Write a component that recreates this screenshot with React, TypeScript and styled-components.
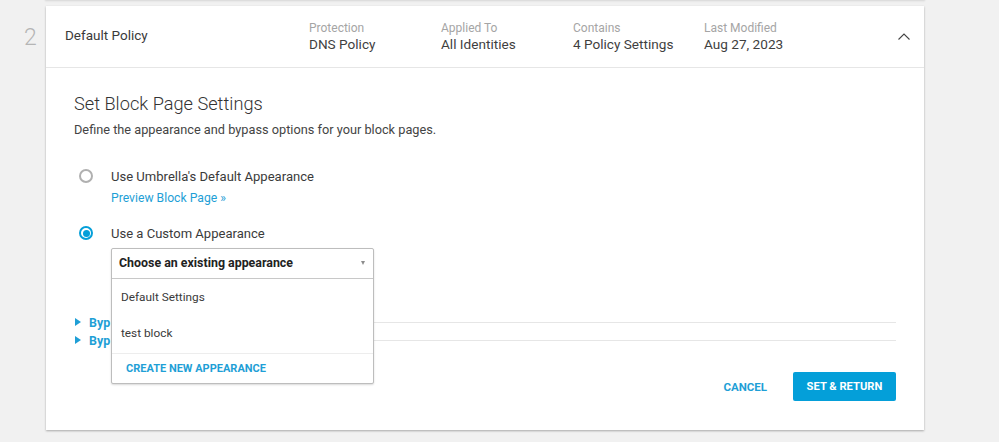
import styled, { createGlobalStyle } from 'styled-components';

const GlobalStyle = createGlobalStyle`
	html, body {
		margin: 0;
		height: 442px;
		overflow: hidden;
		background: #f1f1f1;
		font-family: Roboto, "Liberation Sans", sans-serif;
		color: #333;
	}
`;

const Page = styled.div`
	height: 442px;
	display: flex;
	flex-direction: column;
`;

const PrevCard = styled.div`
	height: 0;
	margin: 0 75px 6px 46px;
	box-shadow: 0 0 2px 1px #d4d4d4;
`;

const Row = styled.div`
	display: flex;
	align-items: flex-start;
`;

const RowNumber = styled.div`
	width: 46px;
	padding: 19px 0 0 15px;
	box-sizing: border-box;
	font-size: 23px;
	line-height: 26px;
	font-weight: 300;
	color: #b5b5b5;
	text-align: center;
`;

const Card = styled.section`
	width: 878px;
	height: 424px;
	background: #fff;
	box-shadow: 0 1px 2px 0 #a8a8a8;
`;

const Header = styled.header`
	height: 61px;
	border-bottom: 1px solid #e6e6e6;
	display: flex;
	align-items: flex-start;
	position: relative;
`;

const PolicyName = styled.div`
	width: 263px;
	padding: 20px 0 0 19px;
	box-sizing: border-box;
	font-size: 13.5px;
	line-height: 18px;
	color: #3a3a3a;
`;

const Meta = styled.div<{ $width: number }>`
	width: ${p => p.$width}px;
	padding-top: 15px;
`;

const MetaLabel = styled.div`
	font-size: 12px;
	line-height: 14px;
	color: #a5a5a5;
`;

const MetaValue = styled.div`
	font-size: 13.6px;
	line-height: 18px;
	color: #3f3f3f;
`;

const Chevron = styled.svg`
	position: absolute;
	left: 851px;
	top: 26px;
	width: 14px;
	height: 9px;
`;

const Body = styled.div`
	padding: 25px 28px 0 28px;
`;

const Title = styled.h2`
	margin: 0;
	font-size: 18.2px;
	line-height: 22px;
	font-weight: 300;
	color: #333;
`;

const Subtitle = styled.p`
	margin: 6px 0 0;
	font-size: 12.75px;
	line-height: 18px;
	color: #444;
`;

const RadioRow = styled.div<{ $top: number }>`
	display: flex;
	align-items: center;
	margin-top: ${p => p.$top}px;
	height: 18px;
`;

const Radio = styled.span<{ $on?: boolean }>`
	width: 14px;
	height: 14px;
	margin-left: 5px;
	margin-right: 18px;
	box-sizing: border-box;
	border-radius: 50%;
	border: ${p => (p.$on ? '2px solid #049fd9' : '2px solid #b0b0b0')};
	display: flex;
	align-items: center;
	justify-content: center;
	&::after {
		content: '';
		display: ${p => (p.$on ? 'block' : 'none')};
		width: 7px;
		height: 7px;
		border-radius: 50%;
		background: #049fd9;
	}
`;

const RadioLabel = styled.span`
	font-size: 13.05px;
	color: #3a3a3a;
`;

const PreviewLink = styled.a`
	display: block;
	margin: 5px 0 0 37px;
	font-size: 12.2px;
	line-height: 16px;
	color: #1f9fd6;
`;

const SelectWrap = styled.div`
	position: relative;
	margin: 6px 0 0 37px;
	width: 263px;
	height: 31px;
`;

const Dropdown = styled.div`
	position: absolute;
	top: 0;
	left: 0;
	z-index: 2;
	width: 263px;
	height: 136px;
	box-sizing: border-box;
	background: #fff;
	border: 1px solid #bdbdbd;
	border-radius: 2px;
	box-shadow: 0 1px 2px rgba(0, 0, 0, 0.15);
`;

const Trigger = styled.div`
	height: 30px;
	box-sizing: border-box;
	padding: 0 7px 2px;
	border-bottom: 1px solid #c8c8c8;
	display: flex;
	align-items: center;
	justify-content: space-between;
	font-size: 12.4px;
	font-weight: 700;
	color: #222;
`;

const Caret = styled.span`
	width: 0;
	height: 0;
	margin-right: 1px;
	border-left: 2px solid transparent;
	border-right: 2px solid transparent;
	border-top: 4px solid #8c8c8c;
`;

const Option = styled.div`
	height: 36px;
	padding: 0 0 1px 9px;
	box-sizing: border-box;
	display: flex;
	align-items: center;
	font-size: 11.8px;
	color: #3a3a3a;
`;

const CreateNew = styled.div`
	height: 30px;
	margin-top: 2px;
	box-sizing: border-box;
	border-top: 1px solid #ededed;
	padding-left: 14px;
	display: flex;
	align-items: center;
	font-size: 11px;
	font-weight: 700;
	color: #1f9fd6;
`;

const BypassList = styled.div`
	margin-top: 34px;
`;

const BypassRow = styled.div`
	height: 18px;
	display: flex;
	align-items: center;
	gap: 8px;
`;

const Triangle = styled.span`
	width: 0;
	height: 0;
	margin-left: 1px;
	border-top: 4px solid transparent;
	border-bottom: 4px solid transparent;
	border-left: 6px solid #1f9fd6;
`;

const BypassLabel = styled.span`
	font-size: 12.4px;
	font-weight: 700;
	color: #1f9fd6;
`;

const BypassLine = styled.span`
	flex: 1;
	height: 1px;
	background: #e6e6e6;
`;

const Actions = styled.div`
	margin-top: 23px;
	display: flex;
	justify-content: flex-end;
	align-items: center;
	gap: 26px;
`;

const CancelButton = styled.button`
	border: 0;
	padding: 0;
	background: none;
	font: 700 11.5px Roboto, sans-serif;
	color: #1f9fd6;
`;

const SubmitButton = styled.button`
	width: 103px;
	height: 29px;
	padding: 0;
	border: 0;
	border-radius: 2px;
	background: #049fd9;
	font: 700 11.2px Roboto, sans-serif;
	color: #fff;
`;

const metas = [
	['Protection', 'DNS Policy', 132],
	['Applied To', 'All Identities', 132],
	['Contains', '4 Policy Settings', 131],
	['Last Modified', 'Aug 27, 2023', 132],
] as const;

export default function App() {
	return (
		<Page>
			<GlobalStyle />
			<PrevCard />
			<Row>
				<RowNumber>2</RowNumber>
				<Card>
					<Header>
						<PolicyName>Default Policy</PolicyName>
						{metas.map(([label, value, width]) => (
							<Meta key={label} $width={width}>
								<MetaLabel>{label}</MetaLabel>
								<MetaValue>{value}</MetaValue>
							</Meta>
						))}
						<Chevron viewBox='0 0 14 9' fill='none'>
							<path d='M1.5 7.5L7 2l5.5 5.5' stroke='#444' strokeWidth='1.1' />
						</Chevron>
					</Header>
					<Body>
						<Title>Set Block Page Settings</Title>
						<Subtitle>Define the appearance and bypass options for your block pages.</Subtitle>
						<RadioRow $top={28}>
							<Radio />
							<RadioLabel>Use Umbrella's Default Appearance</RadioLabel>
						</RadioRow>
						<PreviewLink>Preview Block Page »</PreviewLink>
						<RadioRow $top={18}>
							<Radio $on />
							<RadioLabel>Use a Custom Appearance</RadioLabel>
						</RadioRow>
						<SelectWrap>
							<Dropdown>
								<Trigger>
									Choose an existing appearance
									<Caret />
								</Trigger>
								<Option>Default Settings</Option>
								<Option>test block</Option>
								<CreateNew>CREATE NEW APPEARANCE</CreateNew>
							</Dropdown>
						</SelectWrap>
						<BypassList>
							<BypassRow>
								<Triangle />
								<BypassLabel>Byp</BypassLabel>
								<BypassLine />
							</BypassRow>
							<BypassRow>
								<Triangle />
								<BypassLabel>Byp</BypassLabel>
								<BypassLine />
							</BypassRow>
						</BypassList>
						<Actions>
							<CancelButton>CANCEL</CancelButton>
							<SubmitButton>SET &amp; RETURN</SubmitButton>
						</Actions>
					</Body>
				</Card>
			</Row>
		</Page>
	);
}
